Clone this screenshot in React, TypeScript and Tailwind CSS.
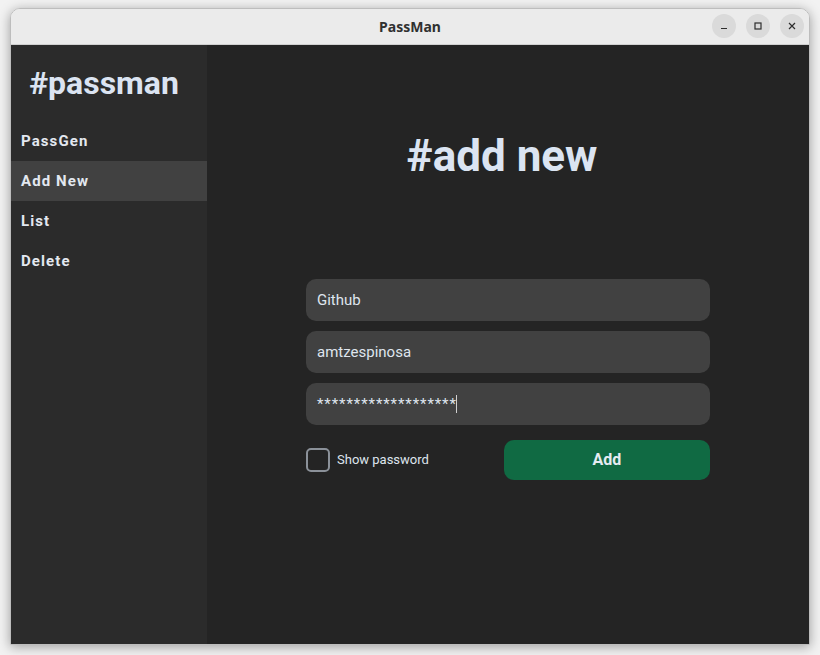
import React, { useState } from 'react';

const navItems = ['PassGen', 'Add New', 'List', 'Delete'];

function TitleButton({ children }: { children: React.ReactNode }) {
  return (
    <div className="w-6 h-6 rounded-full bg-[#dadada] flex items-center justify-center text-[#2e2e2e]">
      {children}
    </div>
  );
}

function App() {
  const [active, setActive] = useState('Add New');
  const [site, setSite] = useState('Github');
  const [user, setUser] = useState('amtzespinosa');
  const [show, setShow] = useState(false);
  const pass = '*******************';

  return (
    <div className="w-[820px] h-[655px] bg-[#f2f2f2] pt-2 px-[10px] pb-[10px]" style={{ fontFamily: 'Roboto, "Noto Sans", sans-serif' }}>
      <div className="w-[800px] h-[637px] flex flex-col rounded-t-[10px] overflow-hidden border border-[#bdbdbd] shadow-[0_2px_12px_rgba(0,0,0,0.35)]">
        {/* Title bar */}
        <div className="h-[36px] shrink-0 bg-[#ebebeb] border-b border-[#d0d0d0] flex items-center relative">
          <div className="flex-1 text-center text-[14px] font-bold text-[#303030]" style={{ fontFamily: '"Noto Sans", "DejaVu Sans", sans-serif' }}>
            PassMan
          </div>
          <div className="absolute right-[5px] top-[5px] flex gap-[10px]">
            <TitleButton>
              <svg width="10" height="10" viewBox="0 0 10 10"><path d="M2 7.5h6" stroke="currentColor" strokeWidth="1.2" /></svg>
            </TitleButton>
            <TitleButton>
              <svg width="10" height="10" viewBox="0 0 10 10"><rect x="2" y="2" width="6" height="6" fill="none" stroke="currentColor" strokeWidth="1.2" /></svg>
            </TitleButton>
            <TitleButton>
              <svg width="10" height="10" viewBox="0 0 10 10"><path d="M2 2l6 6M8 2l-6 6" stroke="currentColor" strokeWidth="1.2" /></svg>
            </TitleButton>
          </div>
        </div>

        <div className="flex-1 flex">
          {/* Sidebar */}
          <div className="w-[196px] shrink-0 bg-[#2b2b2b] flex flex-col">
            <div className="text-[32px] font-bold text-[#dbe4f2] text-center pt-[18px] pb-[18px] leading-[40px] pr-[10px]">
              #passman
            </div>
            {navItems.map((item) => (
              <button
                key={item}
                onClick={() => setActive(item)}
                className={`h-10 text-left pl-[10px] text-[15px] font-bold tracking-[1.1px] text-[#e3e8f0] ${
                  active === item ? 'bg-[#414141]' : ''
                }`}
              >
                {item}
              </button>
            ))}
          </div>

          {/* Main */}
          <div className="flex-1 bg-[#242424] flex flex-col items-center">
            <div className="mt-[84px] text-[44px] font-bold leading-[54px] text-[#dbe4f2] -ml-[12px]">#add new</div>
            <div className="mt-[96px] w-[404px] flex flex-col gap-[10px]">
              <input
                value={site}
                onChange={(e) => setSite(e.target.value)}
                className="h-[42px] rounded-[10px] bg-[#414141] px-[11px] text-[15px] text-[#dfe5ee] outline-none"
              />
              <input
                value={user}
                onChange={(e) => setUser(e.target.value)}
                className="h-[42px] rounded-[10px] bg-[#414141] px-[11px] text-[15px] text-[#dfe5ee] outline-none"
              />
              <div className="h-[42px] rounded-[10px] bg-[#414141] px-[11px] text-[15px] text-[#dfe5ee] flex items-center">
                <span className="tracking-[0.9px]">{show ? 'p4ssw0rd!Secure#2024' : pass}</span>
                <span className="w-px h-[18px] bg-[#d0d0d0] -ml-[1px]" />
              </div>
              <div className="flex items-center justify-between mt-[5px]">
                <label className="flex items-center gap-[7px] cursor-pointer" onClick={() => setShow(!show)}>
                  <div className="w-[24px] h-[24px] rounded-[5px] border-2 border-[#8b9199]" />
                  <span className="text-[13px] text-[#dfe5ee]">Show password</span>
                </label>
                <button className="w-[206px] h-[40px] rounded-[10px] bg-[#106a43] text-[16px] font-bold text-[#e6ecf2]">
                  Add
                </button>
              </div>
            </div>
          </div>
        </div>
      </div>
    </div>
  );
}

export default App;
